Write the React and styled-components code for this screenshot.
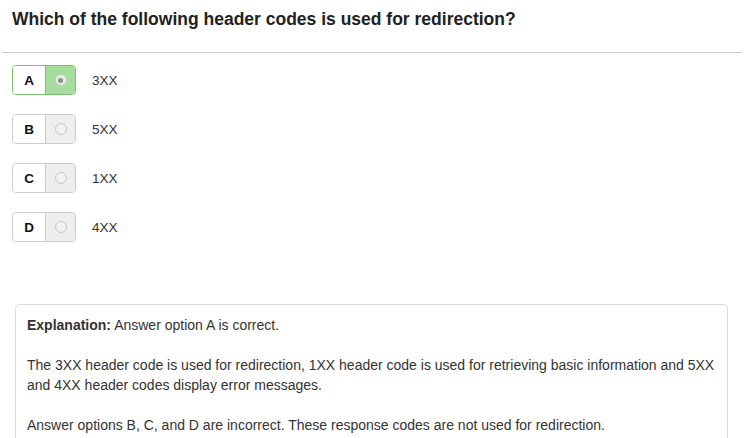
import React from 'react'
import styled, { createGlobalStyle } from 'styled-components'

const GlobalStyle = createGlobalStyle`
    body {
        margin: 0;
        background: #fff;
        font-family: "Liberation Sans", Arial, sans-serif;
        color: #333;
    }
`

const Page = styled.div`
    width: 747px;
    height: 438px;
    overflow: hidden;
`

const Title = styled.h1`
    margin: 0;
    padding: 9px 12px 0;
    height: 52px;
    box-sizing: border-box;
    font-size: 17.5px;
    font-weight: bold;
    color: #222;
`

const Rule = styled.hr`
    margin: 0 5px 0 2px;
    border: 0;
    border-top: 1px solid #ccc;
`

const Options = styled.ul`
    list-style: none;
    margin: 0;
    padding: 12px 0 0 12px;
    display: flex;
    flex-direction: column;
    gap: 19px;
`

const Option = styled.li`
    display: flex;
    align-items: center;
    gap: 16px;
`

const Choice = styled.div`
    display: flex;
    width: 64px;
    height: 30px;
    box-sizing: border-box;
    border: 1px solid ${p => (p.$selected ? '#7cc06e' : '#ccc')};
    border-radius: 4px;
    overflow: hidden;
`

const Letter = styled.span`
    width: 32px;
    display: flex;
    align-items: center;
    justify-content: center;
    background: #fff;
    font-size: 13.5px;
    font-weight: bold;
    color: #111;
    border-right: 1px solid ${p => (p.$selected ? '#7cc06e' : '#ccc')};
`

const RadioCell = styled.span`
    flex: 1;
    display: flex;
    align-items: center;
    justify-content: center;
    background: ${p => (p.$selected ? '#a6dc9d' : '#eee')};
`

const Radio = styled.span`
    width: 12px;
    height: 12px;
    box-sizing: border-box;
    border-radius: 50%;
    border: 1px solid ${p => (p.$selected ? '#b5d6ae' : '#c6c6c6')};
    background: ${p => (p.$selected ? '#e3efe0' : '#f2f2f2')};
    display: flex;
    align-items: center;
    justify-content: center;

    &::after {
        content: '';
        width: 5px;
        height: 5px;
        border-radius: 50%;
        background: ${p => (p.$selected ? '#8a8a8a' : 'transparent')};
    }
`

const Answer = styled.span`
    font-size: 13.5px;
    color: #333;
`

const Explanation = styled.div`
    margin: 62px 19px 0 15px;
    padding: 10px 8px 20px 11px;
    border: 1px solid #ddd;
    border-radius: 4px;
    font-size: 14px;
    line-height: 20px;
    color: #333;

    p {
        margin: 0 0 20px;
    }
`

const options = [
    { key: 'A', text: '3XX', selected: true },
    { key: 'B', text: '5XX' },
    { key: 'C', text: '1XX' },
    { key: 'D', text: '4XX' },
]

function App () {
    return (
        <>
            <GlobalStyle />
            <Page>
                <Title>Which of the following header codes is used for redirection?</Title>
                <Rule />
                <Options>
                    {
                        options.map(option =>
                            <Option key={option.key}>
                                <Choice $selected={option.selected}>
                                    <Letter $selected={option.selected}>{option.key}</Letter>
                                    <RadioCell $selected={option.selected}>
                                        <Radio $selected={option.selected} />
                                    </RadioCell>
                                </Choice>
                                <Answer>{option.text}</Answer>
                            </Option>
                        )
                    }
                </Options>
                <Explanation>
                    <p><b>Explanation:</b> Answer option A is correct.</p>
                    <p>The 3XX header code is used for redirection, 1XX header code is used for retrieving basic information and 5XX and 4XX header codes display error messages.</p>
                    <p>Answer options B, C, and D are incorrect. These response codes are not used for redirection.</p>
                </Explanation>
            </Page>
        </>
    )
}

export default App
